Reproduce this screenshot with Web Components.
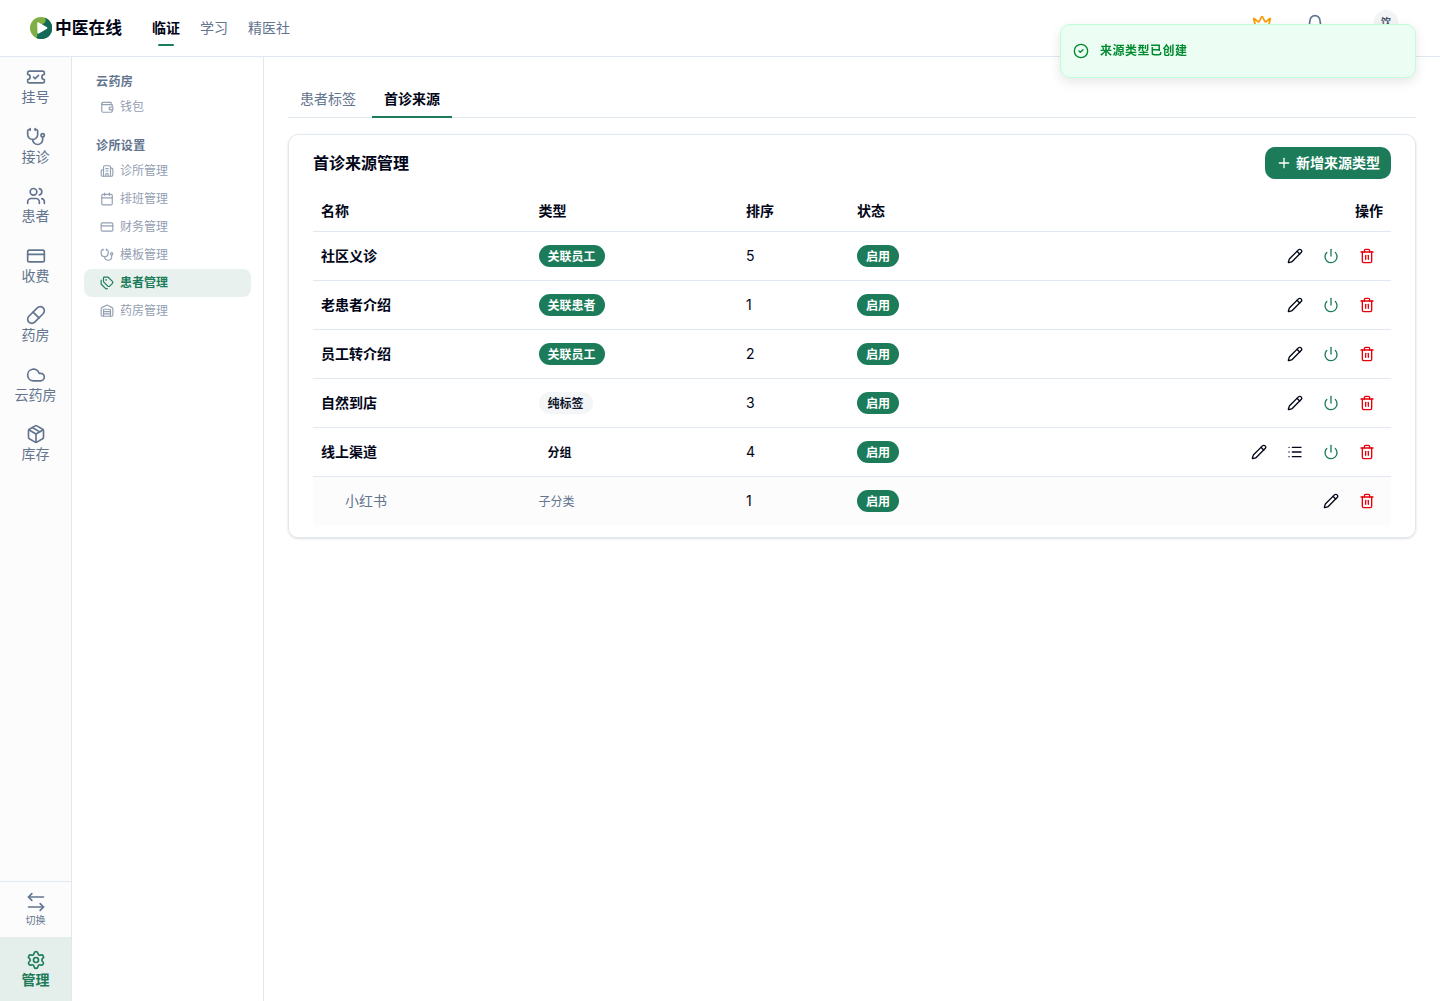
<!DOCTYPE html>
<html lang="zh-CN">
<head>
<meta charset="utf-8">
<title>中医在线</title>
<style>
  html, body { height: 100%; }
  body {
    margin: 0;
    background: #fff;
    color: #020618;
    font-family: Inter, "Noto Sans CJK SC", sans-serif;
    font-size: 14px;
    line-height: 20px;
    --primary: #1c7c5a;
    --border: #e2e8f0;
    --muted: #62748e;
  }
</style>
</head>
<body>
<clinic-app></clinic-app>

<script>
const ICONS = {
  ticket: '<path d="M2 9a3 3 0 1 1 0 6v2a2 2 0 0 0 2 2h16a2 2 0 0 0 2-2v-2a3 3 0 1 1 0-6V7a2 2 0 0 0-2-2H4a2 2 0 0 0-2 2Z"/><path d="m9 12 2 2 4-4"/>',
  stethoscope: '<path d="M11 2v2"/><path d="M5 2v2"/><path d="M5 3H4a2 2 0 0 0-2 2v4a6 6 0 0 0 12 0V5a2 2 0 0 0-2-2h-1"/><path d="M8 15a6 6 0 0 0 12 0v-3"/><circle cx="20" cy="10" r="2"/>',
  users: '<path d="M16 21v-2a4 4 0 0 0-4-4H6a4 4 0 0 0-4 4v2"/><circle cx="9" cy="7" r="4"/><path d="M22 21v-2a4 4 0 0 0-3-3.87"/><path d="M16 3.13a4 4 0 0 1 0 7.75"/>',
  card: '<rect width="20" height="14" x="2" y="5" rx="2"/><path d="M2 10h20"/>',
  pill: '<path d="m10.5 20.5 10-10a4.95 4.95 0 1 0-7-7l-10 10a4.95 4.95 0 1 0 7 7Z"/><path d="m8.5 8.5 7 7"/>',
  cloud: '<path d="M17.5 19H9a7 7 0 1 1 6.71-9h1.79a4.5 4.5 0 1 1 0 9Z"/>',
  box: '<path d="M11 21.73a2 2 0 0 0 2 0l7-4A2 2 0 0 0 21 16V8a2 2 0 0 0-1-1.73l-7-4a2 2 0 0 0-2 0l-7 4A2 2 0 0 0 3 8v8a2 2 0 0 0 1 1.73z"/><path d="M12 22V12"/><path d="m3.3 7 8.7 5 8.7-5"/><path d="m7.5 4.27 9 5.15"/>',
  swap: '<path d="m7 2-4 4 4 4"/><path d="M3 6h18"/><path d="m17 22 4-4-4-4"/><path d="M21 18H3"/>',
  settings: '<path d="M9.671 4.136a2.34 2.34 0 0 1 4.659 0 2.34 2.34 0 0 0 3.319 1.915 2.34 2.34 0 0 1 2.33 4.033 2.34 2.34 0 0 0 0 3.831 2.34 2.34 0 0 1-2.33 4.033 2.34 2.34 0 0 0-3.319 1.915 2.34 2.34 0 0 1-4.659 0 2.34 2.34 0 0 0-3.32-1.915 2.34 2.34 0 0 1-2.33-4.033 2.34 2.34 0 0 0 0-3.831A2.34 2.34 0 0 1 6.35 6.051a2.34 2.34 0 0 0 3.319-1.915"/><circle cx="12" cy="12" r="3"/>',
  wallet: '<path d="M17 14h.01"/><path d="M21 12V8H5a2 2 0 0 1 0-4h14v4"/><path d="M3 6v13a2 2 0 0 0 2 2h14a2 2 0 0 0 2-2v-2"/><path d="M22 12h-4a2.5 2.5 0 0 0 0 5h4z"/>',
  hospital: '<path d="M10 12h4"/><path d="M10 8h4"/><path d="M14 21v-3a2 2 0 0 0-4 0v3"/><path d="M6 10H4a2 2 0 0 0-2 2v7a2 2 0 0 0 2 2h16a2 2 0 0 0 2-2V9a2 2 0 0 0-2-2h-2"/><path d="M6 21V5a2 2 0 0 1 2-2h8a2 2 0 0 1 2 2v16"/>',
  calendar: '<path d="M8 2v4"/><path d="M16 2v4"/><rect width="18" height="18" x="3" y="4" rx="2"/><path d="M3 10h18"/>',
  tags: '<path d="M13.172 2a2 2 0 0 1 1.414.586l6.71 6.71a2.4 2.4 0 0 1 0 3.408l-4.592 4.592a2.4 2.4 0 0 1-3.408 0l-6.71-6.71A2 2 0 0 1 6 9.172V3a1 1 0 0 1 1-1z"/><path d="M2 7v6.172a2 2 0 0 0 .586 1.414l6.71 6.71a2.4 2.4 0 0 0 3.191.193"/><circle cx="10.5" cy="6.5" r=".5" fill="currentColor"/>',
  warehouse: '<path d="M18 21V10a1 1 0 0 0-1-1H7a1 1 0 0 0-1 1v11"/><path d="M22 19a2 2 0 0 1-2 2H4a2 2 0 0 1-2-2V8a2 2 0 0 1 1.132-1.803l7.95-3.974a2 2 0 0 1 1.837 0l7.948 3.974A2 2 0 0 1 22 8z"/><path d="M6 13h12"/><path d="M6 17h12"/>',
  crown: '<path d="M11.562 3.266a.5.5 0 0 1 .876 0L15.39 8.87a1 1 0 0 0 1.516.294L21.183 5.5a.5.5 0 0 1 .798.519l-2.834 10.246a1 1 0 0 1-.956.734H5.81a1 1 0 0 1-.957-.734L2.02 6.02a.5.5 0 0 1 .798-.519l4.276 3.664a1 1 0 0 0 1.516-.294z"/><path d="M5 21h14"/>',
  bell: '<path d="M10.268 21a2 2 0 0 0 3.464 0"/><path d="M3.262 15.326A1 1 0 0 0 4 17h16a1 1 0 0 0 .74-1.673C19.41 13.956 18 12.499 18 8A6 6 0 0 0 6 8c0 4.499-1.411 5.956-2.738 7.326"/>',
  check: '<circle cx="12" cy="12" r="10"/><path d="m9 12 2 2 4-4"/>',
  plus: '<path d="M5 12h14"/><path d="M12 5v14"/>',
  pencil: '<path d="M21.174 6.812a1 1 0 0 0-3.986-3.987L3.842 16.174a2 2 0 0 0-.5.83l-1.321 4.352a.5.5 0 0 0 .623.622l4.353-1.32a2 2 0 0 0 .83-.497z"/><path d="m15 5 4 4"/>',
  power: '<path d="M12 2v10"/><path d="M18.4 6.6a9 9 0 1 1-12.77.04"/>',
  trash: '<path d="M3 6h18"/><path d="M19 6v14a2 2 0 0 1-2 2H7a2 2 0 0 1-2-2V6"/><path d="M8 6V4a2 2 0 0 1 2-2h4a2 2 0 0 1 2 2v2"/><path d="M10 11v6"/><path d="M14 11v6"/>',
  list: '<path d="M3 5h.01"/><path d="M3 12h.01"/><path d="M3 19h.01"/><path d="M8 5h13"/><path d="M8 12h13"/><path d="M8 19h13"/>'
};

class UiIcon extends HTMLElement {
  connectedCallback() {
    const size = this.getAttribute('size') || 16;
    this.attachShadow({ mode: 'open' }).innerHTML = `
      <style>
        :host { display: block; flex: none; width: ${size}px; height: ${size}px; }
        svg { display: block; }
      </style>
      <svg width="${size}" height="${size}" viewBox="0 0 24 24" fill="none" stroke="currentColor"
        stroke-width="2" stroke-linecap="round" stroke-linejoin="round">${ICONS[this.getAttribute('name')]}</svg>
    `;
  }
}
customElements.define('ui-icon', UiIcon);

class TopBar extends HTMLElement {
  connectedCallback() {
    this.attachShadow({ mode: 'open' }).innerHTML = `
      <style>
        :host { display: flex; box-sizing: border-box; height: 57px; border-bottom: 1px solid var(--border); padding: 0 42px 0 30px; }
        .brand { display: flex; align-items: center; gap: 3px; width: 93px; font-size: 16.8px; line-height: 24px; font-weight: 600; white-space: nowrap; }
        .brand svg { display: block; }
        nav { display: flex; align-items: center; gap: 20px; margin-left: 29px; color: var(--muted); }
        nav span { line-height: 20px; padding: 8px 0; }
        nav .active { color: #020618; font-weight: 600; display: flex; flex-direction: column; align-items: center; padding-bottom: 0; }
        nav .active::after { content: ""; width: 16px; height: 2px; margin: 6px 0 0; border-radius: 1px; background: var(--primary); }
        .tools { display: flex; margin-left: auto; color: var(--muted); }
        .tools ui-icon { margin-top: 14px; }
        .crown { color: #fe9a00; margin-right: 33px; }
        .avatar { width: 24px; height: 24px; margin: 10px 0 0 49px; border-radius: 50%; background: #f3f4f6; color: #45556c; font-size: 10px; font-weight: 600; line-height: 24px; text-align: center; }
      </style>
      <div class="brand">
        <svg width="22" height="22" viewBox="0 0 22 22">
          <circle cx="11" cy="11" r="11" fill="#7fae42"/>
          <path d="M15 .8A11 11 0 1 1 6 20.800C8.500 19.500 6.500 16 7 12 C10 7 18 7 15 .8Z" fill="#136b57"/>
          <path d="M8 6v10l8.600-5Z" fill="#fff" stroke="#fff" stroke-width="1.500" stroke-linejoin="round"/>
        </svg>
        <span>中医在线</span>
      </div>
      <nav><span class="active">临证</span><span>学习</span><span>精医社</span></nav>
      <div class="tools">
        <ui-icon class="crown" name="crown" size="20"></ui-icon>
        <ui-icon name="bell" size="20"></ui-icon>
        <div class="avatar">饮</div>
      </div>
    `;
  }
}
customElements.define('top-bar', TopBar);

class RailItem extends HTMLElement {
  connectedCallback() {
    this.attachShadow({ mode: 'open' }).innerHTML = `
      <style>
        :host { display: flex; flex-direction: column; align-items: center; box-sizing: border-box; height: 59.5px; padding-top: 10px; color: var(--muted); line-height: 20px; }
        :host([small]) { height: 55px; font-size: 10px; }
        :host([small]) span { line-height: 16px; }
        :host([active]) { height: 64px; padding-top: 13px; background: #e4eeeb; color: var(--primary); font-weight: 600; }
      </style>
      <ui-icon name="${this.getAttribute('icon')}" size="20"></ui-icon>
      <span><slot></slot></span>
    `;
  }
}
customElements.define('rail-item', RailItem);

class IconRail extends HTMLElement {
  connectedCallback() {
    this.attachShadow({ mode: 'open' }).innerHTML = `
      <style>
        :host { display: flex; flex-direction: column; justify-content: space-between; box-sizing: border-box; width: 72px; border-right: 1px solid var(--border); background: #fcfcfc; }
        .bottom { border-top: 1px solid var(--border); }
      </style>
      <div>
        <rail-item icon="ticket">挂号</rail-item>
        <rail-item icon="stethoscope">接诊</rail-item>
        <rail-item icon="users">患者</rail-item>
        <rail-item icon="card">收费</rail-item>
        <rail-item icon="pill">药房</rail-item>
        <rail-item icon="cloud">云药房</rail-item>
        <rail-item icon="box">库存</rail-item>
      </div>
      <div class="bottom">
        <rail-item icon="swap" small>切换</rail-item>
        <rail-item icon="settings" active>管理</rail-item>
      </div>
    `;
  }
}
customElements.define('icon-rail', IconRail);

class MenuItem extends HTMLElement {
  connectedCallback() {
    this.attachShadow({ mode: 'open' }).innerHTML = `
      <style>
        :host { display: flex; align-items: center; gap: 6px; height: 28px; padding: 0 16px; border-radius: 8px; font-size: 12px; line-height: 16px; color: #94a0b3; }
        :host([active]) { background: #e8f1ee; color: var(--primary); font-weight: 600; }
      </style>
      <ui-icon name="${this.getAttribute('icon')}" size="14"></ui-icon>
      <slot></slot>
    `;
  }
}
customElements.define('menu-item', MenuItem);

class SideMenu extends HTMLElement {
  connectedCallback() {
    this.attachShadow({ mode: 'open' }).innerHTML = `
      <style>
        :host { display: block; box-sizing: border-box; width: 192px; padding: 12px; border-right: 1px solid var(--border); }
        h3 { margin: 0; padding: 0 12px; height: 24px; font-size: 12px; line-height: 25px; font-weight: 600; letter-spacing: .4px; color: var(--muted); }
        section + section { margin-top: 12px; }
      </style>
      <section>
        <h3>云药房</h3>
        <menu-item icon="wallet">钱包</menu-item>
      </section>
      <section>
        <h3>诊所设置</h3>
        <menu-item icon="hospital">诊所管理</menu-item>
        <menu-item icon="calendar">排班管理</menu-item>
        <menu-item icon="card">财务管理</menu-item>
        <menu-item icon="stethoscope">模板管理</menu-item>
        <menu-item icon="tags" active>患者管理</menu-item>
        <menu-item icon="warehouse">药房管理</menu-item>
      </section>
    `;
  }
}
customElements.define('side-menu', SideMenu);

class PageTabs extends HTMLElement {
  connectedCallback() {
    this.attachShadow({ mode: 'open' }).innerHTML = `
      <style>
        :host { display: flex; gap: 4px; height: 36px; border-bottom: 1px solid var(--border); color: var(--muted); line-height: 36px; }
        span { padding: 0 12px; }
        .active { height: 35px; border-bottom: 2px solid var(--primary); color: #020618; font-weight: 600; }
      </style>
      <span>患者标签</span>
      <span class="active">首诊来源</span>
    `;
  }
}
customElements.define('page-tabs', PageTabs);

class UiBadge extends HTMLElement {
  connectedCallback() {
    this.attachShadow({ mode: 'open' }).innerHTML = `
      <style>
        :host { display: block; width: fit-content; border-radius: 11px; padding: 1px 9px 0; font-size: 12px; line-height: 21px; font-weight: 600; background: var(--primary); color: #fff; }
        :host([kind="soft"]) { background: #f3f5f7; color: #0f172b; }
        :host([kind="plain"]) { background: none; color: #020618; }
      </style>
      <slot></slot>
    `;
  }
}
customElements.define('ui-badge', UiBadge);

class SourceRow extends HTMLElement {
  connectedCallback() {
    const kind = this.getAttribute('kind') || 'solid';
    const type = this.getAttribute('type');
    const actions = this.getAttribute('actions').split(' ');
    this.attachShadow({ mode: 'open' }).innerHTML = `
      <style>
        :host { display: grid; grid-template-columns: 217.5px 207.5px 111px 1fr auto; align-items: center; height: 48px; padding: 0 8px; border-bottom: 1px solid var(--border); }
        :host(:last-of-type) { border-bottom: 0; }
        :host([child]) { background: #fcfcfc; }
        .name { font-weight: 600; }
        :host([child]) .name { padding-left: 24px; font-weight: 400; color: var(--muted); }
        .sub { font-size: 12px; color: var(--muted); }
        .actions { display: flex; gap: 4px; }
        .actions span { padding: 8px; }
        .power { color: var(--primary); }
        .trash { color: #e7000b; }
      </style>
      <div class="name">${this.getAttribute('name')}</div>
      <div>${kind === 'text' ? `<span class="sub">${type}</span>` : `<ui-badge kind="${kind}">${type}</ui-badge>`}</div>
      <div>${this.getAttribute('order')}</div>
      <div><ui-badge>启用</ui-badge></div>
      <div class="actions">
        ${actions.map(a => `<span class="${a}"><ui-icon name="${a}"></ui-icon></span>`).join('')}
      </div>
    `;
  }
}
customElements.define('source-row', SourceRow);

class SourceCard extends HTMLElement {
  connectedCallback() {
    this.attachShadow({ mode: 'open' }).innerHTML = `
      <style>
        :host { display: block; margin-top: 16px; padding: 12px 24px; border: 1px solid var(--border); border-radius: 10px; box-shadow: 0 1px 3px rgba(0,0,0,.1), 0 1px 2px -1px rgba(0,0,0,.1); }
        header { display: flex; justify-content: space-between; align-items: center; height: 32px; margin-bottom: 12px; }
        h2 { margin: 0; font-size: 16px; line-height: 24px; font-weight: 600; }
        button { display: flex; align-items: center; gap: 4px; height: 32px; padding: 0 11px; border: 0; border-radius: 10px; background: var(--primary); color: #fff; font: inherit; font-weight: 600; }
        .head { display: grid; grid-template-columns: 217.5px 207.5px 111px 1fr auto; align-items: center; height: 40px; padding: 0 8px; border-bottom: 1px solid var(--border); font-weight: 600; }
      </style>
      <header>
        <h2>首诊来源管理</h2>
        <button><ui-icon name="plus"></ui-icon>新增来源类型</button>
      </header>
      <div class="head"><span>名称</span><span>类型</span><span>排序</span><span>状态</span><span>操作</span></div>
      <source-row name="社区义诊" type="关联员工" order="5" actions="pencil power trash"></source-row>
      <source-row name="老患者介绍" type="关联患者" order="1" actions="pencil power trash"></source-row>
      <source-row name="员工转介绍" type="关联员工" order="2" actions="pencil power trash"></source-row>
      <source-row name="自然到店" type="纯标签" kind="soft" order="3" actions="pencil power trash"></source-row>
      <source-row name="线上渠道" type="分组" kind="plain" order="4" actions="pencil list power trash"></source-row>
      <source-row name="小红书" type="子分类" kind="text" order="1" actions="pencil trash" child></source-row>
    `;
  }
}
customElements.define('source-card', SourceCard);

class ToastMessage extends HTMLElement {
  connectedCallback() {
    this.attachShadow({ mode: 'open' }).innerHTML = `
      <style>
        :host { position: fixed; top: 24px; right: 24px; display: flex; align-items: center; gap: 11px; box-sizing: border-box; width: 356px; height: 54px; padding: 0 12px; border: 1px solid #bffcd9; border-radius: 10px; background: #ecfdf3; color: #008a2e; font-size: 12px; line-height: 18px; font-weight: 600; letter-spacing: .5px; box-shadow: 0 4px 12px rgba(0,0,0,.1); }
      </style>
      <ui-icon name="check"></ui-icon>
      <slot></slot>
    `;
  }
}
customElements.define('toast-message', ToastMessage);

class ClinicApp extends HTMLElement {
  connectedCallback() {
    this.attachShadow({ mode: 'open' }).innerHTML = `
      <style>
        :host { display: flex; flex-direction: column; height: 100%; }
        .body { display: flex; flex: 1; min-height: 0; }
        main { flex: 1; padding: 24px; }
      </style>
      <top-bar></top-bar>
      <div class="body">
        <icon-rail></icon-rail>
        <side-menu></side-menu>
        <main>
          <page-tabs></page-tabs>
          <source-card></source-card>
        </main>
      </div>
      <toast-message>来源类型已创建</toast-message>
    `;
  }
}
customElements.define('clinic-app', ClinicApp);
</script>
</body>
</html>
